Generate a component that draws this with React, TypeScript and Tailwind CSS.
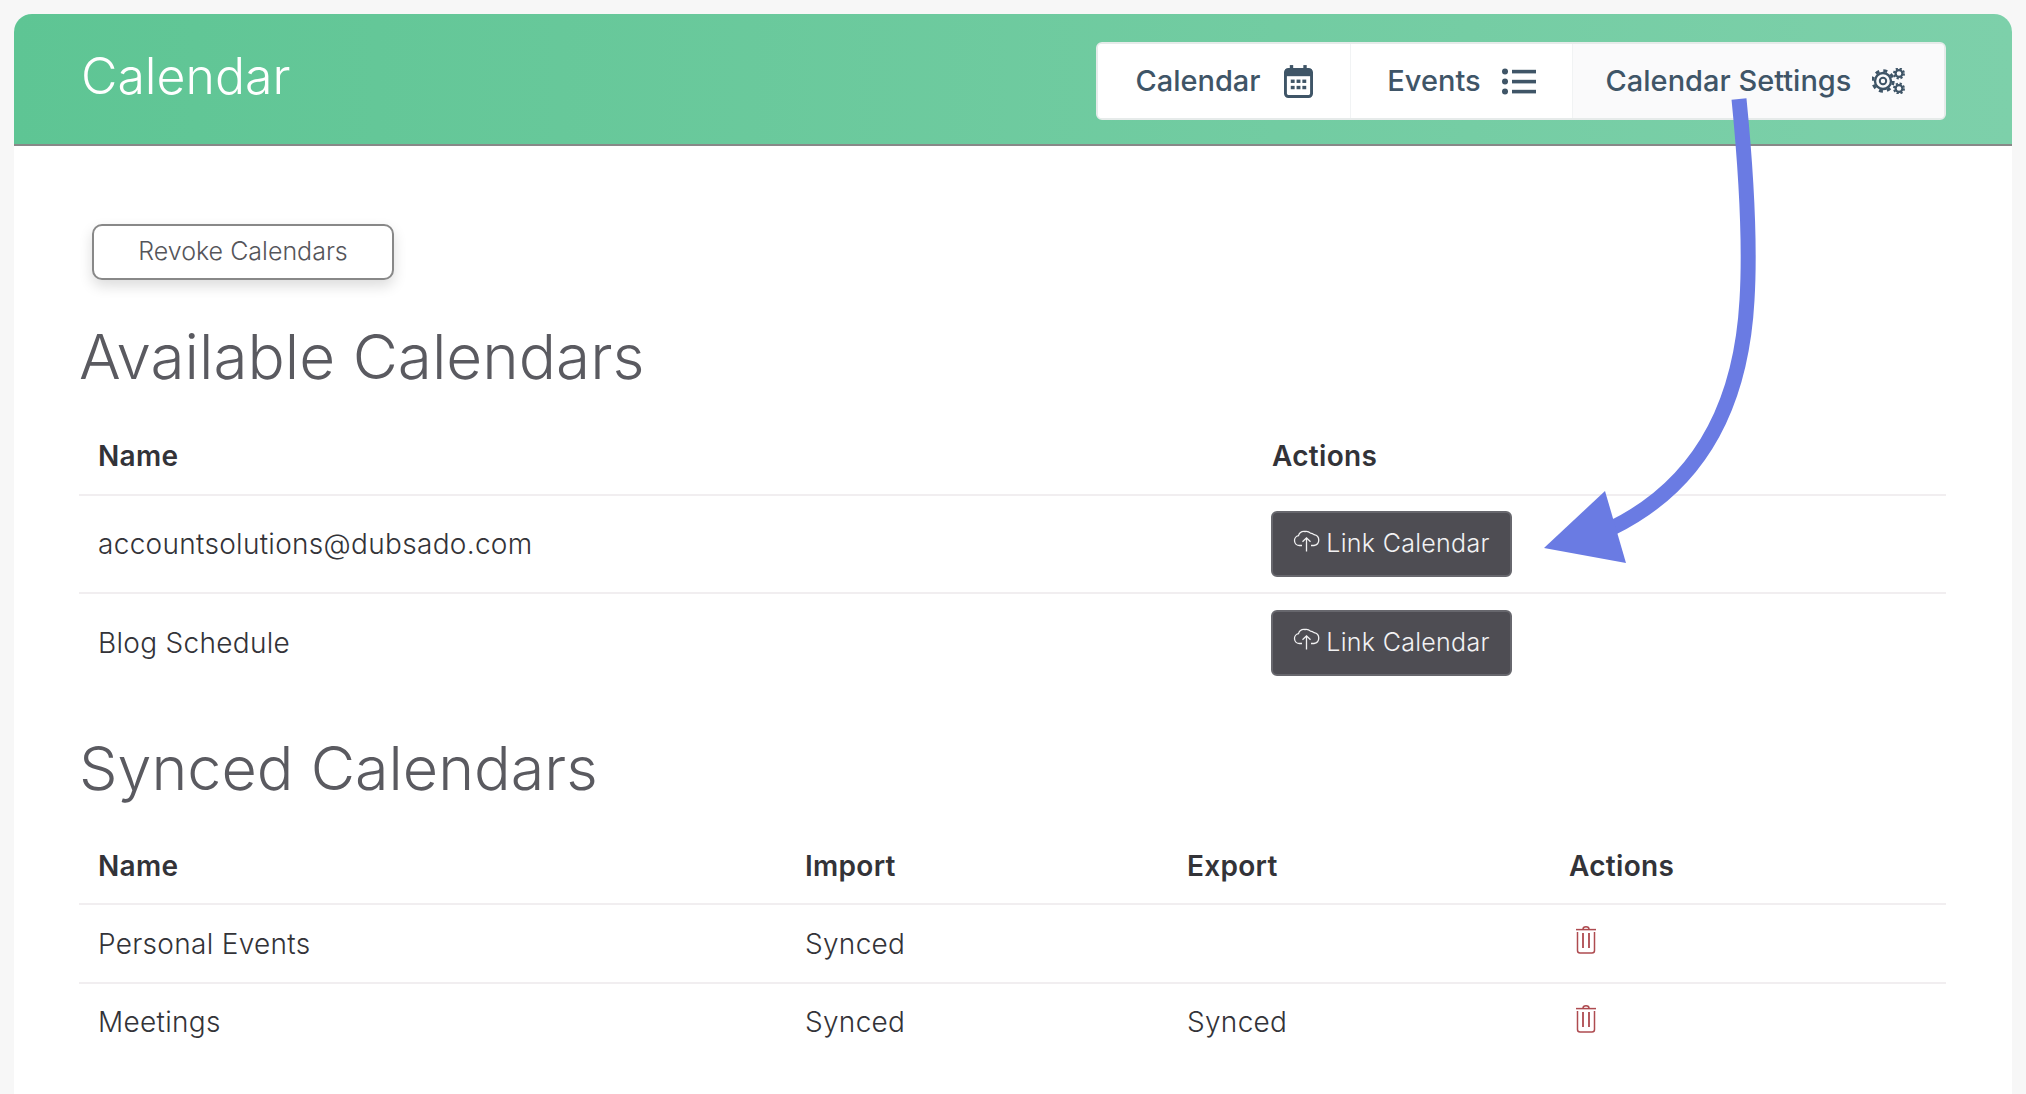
const sans = "font-['Inter','Liberation_Sans',sans-serif]";

function CalendarIcon() {
  return (
    <svg width="29" height="33" viewBox="0 0 30 34" fill="none">
      <rect x="1.5" y="4.5" width="27" height="28" rx="3" stroke="#3f5567" strokeWidth="3" />
      <rect x="1.5" y="4.5" width="27" height="7" fill="#3f5567" />
      <rect x="6" y="0" width="3.5" height="6" fill="#3f5567" />
      <rect x="20" y="0" width="3.5" height="6" fill="#3f5567" />
      <g fill="#3f5567">
        <rect x="7" y="15" width="4" height="3.5" />
        <rect x="13" y="15" width="4" height="3.5" />
        <rect x="19" y="15" width="4" height="3.5" />
        <rect x="7" y="21.5" width="4" height="3.5" />
        <rect x="13" y="21.5" width="4" height="3.5" />
        <rect x="19" y="21.5" width="4" height="3.5" />
      </g>
    </svg>
  );
}

function ListIcon() {
  return (
    <svg width="34" height="27" viewBox="0 0 34 27" fill="#3f5567">
      <circle cx="3" cy="3.5" r="3" />
      <circle cx="3" cy="13.5" r="3" />
      <circle cx="3" cy="23.5" r="3" />
      <rect x="10" y="1.8" width="24" height="3.6" />
      <rect x="10" y="11.8" width="24" height="3.6" />
      <rect x="10" y="21.8" width="24" height="3.6" />
    </svg>
  );
}

function GearsIcon() {
  return (
    <svg width="34" height="26" viewBox="0 0 34 26" fill="none" stroke="#3f5567">
      <circle cx="11" cy="13" r="8" strokeWidth="2.4" />
      <circle cx="11" cy="13" r="10.3" strokeWidth="2.8" strokeDasharray="4 4.09" />
      <circle cx="11" cy="13" r="3.2" strokeWidth="2" />
      <circle cx="27" cy="5.5" r="3.4" strokeWidth="2.2" />
      <circle cx="27" cy="5.5" r="5" strokeWidth="2" strokeDasharray="2.2 1.73" />
      <circle cx="27" cy="20.5" r="3.4" strokeWidth="2.2" />
      <circle cx="27" cy="20.5" r="5" strokeWidth="2" strokeDasharray="2.2 1.73" />
    </svg>
  );
}

function CloudIcon() {
  return (
    <svg width="27" height="23" viewBox="0 0 27 23" fill="none" stroke="#f2f2f3" strokeWidth="1.3">
      <path d="M9 16.5H6.5a5 5 0 0 1-1-9.9A6 6 0 0 1 12 2.5a6.2 6.2 0 0 1 5.5 1.6A5.6 5.6 0 0 1 21 5.6a5.5 5.5 0 0 1 0 10.9h-3" />
      <path d="M13.5 22.5V9M9.5 12.8l4-4 4 4" />
    </svg>
  );
}

function TrashIcon() {
  return (
    <svg className="-mt-2" width="20" height="29" viewBox="0 0 20 29" fill="none" stroke="#ae4b50" strokeWidth="1.5">
      <path d="M0 4.6h20" />
      <path d="M7 4.2C7 1 13 1 13 4.2" />
      <path d="M1.5 7v18.5c0 1.5 1 2.5 2.5 2.5h12c1.5 0 2.5-1 2.5-2.5V7" />
      <path d="M7 8v15M13 8v15" strokeWidth="1.8" />
    </svg>
  );
}

function LinkButton() {
  return (
    <button className="flex h-[66px] w-[241px] items-center justify-center gap-[6px] rounded-[6px] border-2 border-[#67676d] bg-[#4e4d53] text-[25px] font-light text-[#f2f2f3]">
      <span className="-mt-2">
        <CloudIcon />
      </span>
      Link Calendar
    </button>
  );
}

function Tab({ label, icon, active, width, gap }: { label: string; icon: React.ReactNode; active?: boolean; width: string; gap: string }) {
  return (
    <div className={`flex h-full items-center justify-center ${width} ${gap} ${active ? "bg-[#fafafb] pr-[5px]" : "border-r border-[#f1f3f4] bg-white"}`}>
      <span className="text-[29px] font-medium text-[#3f5567]">{label}</span>
      {icon}
    </div>
  );
}

export default function App() {
  return (
    <div className={`relative h-[1094px] overflow-hidden bg-[#f7f7f7] pl-[14px] pr-[14px] pt-[14px] ${sans}`}>
      <div className="h-full rounded-t-[18px] bg-white">
        <header className="flex h-[132px] items-start justify-between rounded-t-[18px] border-b-2 border-[#888888] bg-gradient-to-r from-[#5ec594] to-[#7dd0aa] pl-[67px] pr-[66px]">
          <h1 className="mt-[32px] text-[50px] font-light leading-[60px] text-white">Calendar</h1>
          <nav className="mt-[28px] flex h-[78px] w-[850px] overflow-hidden rounded-[6px] border-2 border-[#e6ebea] bg-white">
            <Tab label="Calendar" width="w-[253px]" gap="gap-[23px]" icon={<CalendarIcon />} />
            <Tab label="Events" width="w-[222px]" gap="gap-[21px]" icon={<ListIcon />} />
            <Tab label="Calendar Settings" width="flex-1" gap="gap-[21px]" active icon={<GearsIcon />} />
          </nav>
        </header>

        <main className="pl-[65px] pr-[66px] pt-[78px]">
          <button className="ml-[13px] h-[56px] w-[302px] rounded-[10px] border-2 border-[#888888] bg-white text-[25px] font-light text-[#55555a] shadow-[0_6px_14px_rgba(0,0,0,0.14)]">
            Revoke Calendars
          </button>

          <h2 className="mt-[37px] text-[62px] font-light leading-[80px] text-[#5a5a60]">Available Calendars</h2>

          <table className="mt-[21px] w-full table-fixed text-[28px] font-light tracking-[0.3px] text-[#333338]">
            <colgroup>
              <col className="w-[1192px]" />
              <col />
            </colgroup>
            <thead>
              <tr className="h-[77px] border-b-2 border-[#f1eef0] text-left">
                <th className="pl-[19px] font-semibold">Name</th>
                <th className="pl-[1px] font-semibold">Actions</th>
              </tr>
            </thead>
            <tbody>
              <tr className="h-[98px] border-b-2 border-[#f1eef0]">
                <td className="pl-[19px]">accountsolutions@dubsado.com</td>
                <td>
                  <LinkButton />
                </td>
              </tr>
              <tr className="h-[98px]">
                <td className="pl-[19px]">Blog Schedule</td>
                <td>
                  <LinkButton />
                </td>
              </tr>
            </tbody>
          </table>

          <h2 className="mt-[37px] text-[61px] font-light leading-[80px] text-[#5a5a60]">Synced Calendars</h2>

          <table className="mt-[21px] w-full table-fixed text-[28px] font-light tracking-[0.3px] text-[#333338]">
            <colgroup>
              <col className="w-[726px]" />
              <col className="w-[382px]" />
              <col className="w-[382px]" />
              <col />
            </colgroup>
            <thead>
              <tr className="h-[75px] border-b-2 border-[#f1eef0] text-left">
                <th className="pl-[19px] font-semibold">Name</th>
                <th className="font-semibold">Import</th>
                <th className="font-semibold">Export</th>
                <th className="font-semibold">Actions</th>
              </tr>
            </thead>
            <tbody>
              <tr className="h-[79px] border-b-2 border-[#f1eef0]">
                <td className="pl-[19px]">Personal Events</td>
                <td>Synced</td>
                <td></td>
                <td className="pl-[7px]">
                  <TrashIcon />
                </td>
              </tr>
              <tr className="h-[77px]">
                <td className="pl-[19px]">Meetings</td>
                <td>Synced</td>
                <td>Synced</td>
                <td className="pl-[7px]">
                  <TrashIcon />
                </td>
              </tr>
            </tbody>
          </table>
        </main>
      </div>

      {/* annotation arrow over the page */}
      <svg className="absolute left-[1540px] top-[95px]" width="220" height="475" viewBox="1540 95 220 475" fill="none">
        <path d="M1739 99C1747 180 1750 250 1747 300C1742 390 1710 480 1612 528" stroke="#6a7be3" strokeWidth="15" />
        <path d="M1605 491L1544 548L1626 563Z" fill="#6a7be3" />
      </svg>
    </div>
  );
}
